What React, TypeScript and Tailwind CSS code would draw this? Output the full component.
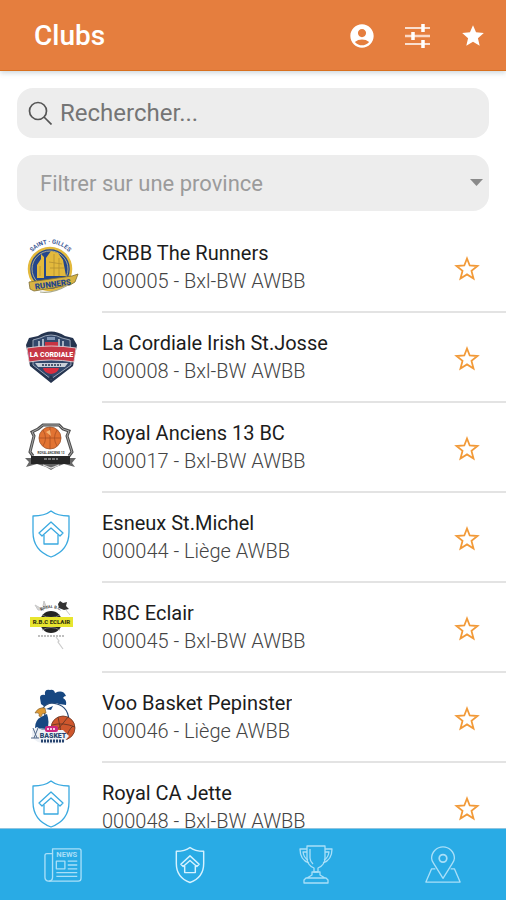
import { useState } from "react";
import type { ReactNode } from "react";
import { MdAccountCircle, MdStar } from "react-icons/md";

interface Club {
  id: string;
  name: string;
  region: string;
  logo: () => ReactNode;
}

function ShieldPaths() {
  return (
    <>
      <path d="M26 -1 C21 3 15 4 8 4 V20 C8 33 15 41 26 45 C37 41 44 33 44 20 V4 C37 4 31 3 26 -1 Z" />
      <path d="M26 10 L14 21 L17 24 L26 16 L35 24 L38 21 Z" />
      <path d="M19 23 V32 H33 V23" />
    </>
  );
}

function ShieldLogo() {
  return (
    <g fill="none" stroke="#3aa9e0" strokeWidth="1.3" strokeLinejoin="round">
      <ShieldPaths />
    </g>
  );
}

function RunnersLogo() {
  return (
    <>
      <path id="runners-arc" d="M4 15 A24 24 0 0 1 47 15" fill="none" />
      <text fill="#3c5794" fontSize="6" fontWeight="700">
        <textPath href="#runners-arc" startOffset="50%" textAnchor="middle">SAINT · GILLES</textPath>
      </text>
      <circle cx="25" cy="27" r="21" fill="#24468b" stroke="#e3b93c" strokeWidth="2.500" />
      <circle cx="25" cy="27" r="18" fill="none" stroke="#cfc48f" strokeWidth="0.8" />
      <path d="M12 36 V23 L16 17 V12 L19 15 V36 Z M21 34 V16 L26 9 L33 11 L38 18 L41 34 Z" fill="#e3b93c" />
      <path d="M15 24 V34 M24 20 L37 22 M25 26 H39 M29 12 V34 M34 16 V34" stroke="#b48f31" strokeWidth="0.8" />
      <path d="M4 40 L47 34 L53 32 L50 40 L45 43 L9 49 L5 47 Z" fill="#d8b443" stroke="#7d6c35" strokeWidth="0.8" />
      <text x="28" y="45" transform="rotate(-8 28 43)" textAnchor="middle" fill="#24468b" fontSize="8" fontWeight="900">RUNNERS</text>
      <path d="M15 50 Q28 52 43 43" fill="none" stroke="#aaa98c" strokeWidth="1.2" />
    </>
  );
}

function CordialeLogo() {
  return (
    <>
      <path d="M4 6 L13 4 Q26 -5 40 4 L48 6 L52 13 L48 34 L26 51 L5 34 L1 13 Z" fill="#25344f" />
      <path d="M8 8 L15 6 Q26 0 37 6 L45 8 L46 33 L26 47 L8 33 Z" fill="#33486b" stroke="#a4afc0" strokeWidth="0.9" />
      <path d="M14 9 V15 M18 7 V15 M34 7 V15 M38 9 V15" stroke="#c4ccd9" strokeWidth="1.6" />
      <path d="M22 5 H30 V8 H22 Z" fill="#8397b6" />
      <path d="M20 10 H33 V15 H20 Z" fill="#c73342" />
      <path d="M2 16 Q26 12 51 16 L49 30 Q26 26 4 30 Z" fill="#c63745" stroke="#e9e6ea" strokeWidth="0.8" />
      <text x="26.500" y="25" textAnchor="middle" fill="#fff" fontSize="7" fontWeight="900">LA CORDIALE</text>
      <path d="M10 31 H43 L40 35 H13 Z" fill="#c9cfd8" />
      <path d="M17 33 H36" stroke="#25344f" strokeWidth="1.4" strokeDasharray="2 1" />
      <path d="M18 36 H34 Q33 41 26 42 Q19 41 18 36 Z" fill="#d92e3f" />
      <path d="M26 43 L29 47 H23 Z" fill="#25344f" />
    </>
  );
}

function AnciensLogo() {
  return (
    <>
      <path d="M8 34 L5 30 L9 14 L7 10 L13 7 L18 3 H34 L38 7 L44 9 L42 14 L47 30 L44 34" fill="none" stroke="#4d4d4d" strokeWidth="3" />
      <path d="M8 34 L5 30 L9 14 L7 10 L13 7 L18 3 H34 L38 7 L44 9 L42 14 L47 30 L44 34" fill="none" stroke="#bdbdbd" strokeWidth="0.8" />
      <circle cx="25" cy="16" r="11" fill="#e27332" stroke="#9c542e" strokeWidth="0.8" />
      <path d="M14 16 H36 M25 5 V27 M18 8 Q23 16 18 24 M32 8 Q27 16 32 24" fill="none" stroke="#a94f22" strokeWidth="0.8" />
      <path d="M21 10 L25 8 L26 14 Z" fill="#f5b878" />
      <text x="26" y="32" textAnchor="middle" fill="#333" fontSize="3" fontWeight="700">ROYAL ANCIENS 13</text>
      <path d="M0 36 H51 L47 41 L50 45 L39 42 Q32 44 26 48 Q20 44 12 42 L1 45 L4 40 Z" fill="#666" />
      <path d="M6 34 H45 V42 H6 Z" fill="#272727" />
      <path d="M19 37 H33" stroke="#777" strokeWidth="2" strokeDasharray="3 1" />
      <path d="M18 43 L26 46 L34 43" fill="none" stroke="#ddd" strokeWidth="1.2" />
    </>
  );
}

function EclairLogo() {
  return (
    <>
      <path d="M10 3 L19 8 L13 8 Z M19 -1 L22 7 L18 4 Z" fill="#d5d5d5" stroke="#c8c8c8" strokeWidth="1" />
      <path id="eclair-arc" d="M14 10 Q26 2 38 10" fill="none" />
      <text fill="#333" fontSize="4" fontWeight="700">
        <textPath href="#eclair-arc" startOffset="50%" textAnchor="middle">ROYAL B.C.</textPath>
      </text>
      <circle cx="26" cy="20" r="11" fill="#242424" />
      <path d="M17 13 Q26 18 35 13 M17 28 Q26 23 35 28" fill="none" stroke="#888" strokeWidth="0.8" />
      <path d="M33 2 L35 -1 L38 1 L42 0 L41 4 L44 7 L39 8 L34 6 Z" fill="#333" />
      <path d="M41 8 L45 13" stroke="#c8c8c8" strokeWidth="1" />
      <rect x="5" y="15" width="43" height="10" fill="#e8e52f" />
      <text x="26.500" y="22" textAnchor="middle" fill="#36350e" fontSize="6" fontWeight="900">R.B.C ECLAIR</text>
      <path d="M13 34 H40" stroke="#aaa" strokeWidth="1.3" strokeDasharray="2 1" />
      <path d="M31 35 L34 39 L33 40 L38 47" fill="none" stroke="#ccc" strokeWidth="1.2" />
    </>
  );
}

function PepinsterLogo() {
  return (
    <>
      <path d="M16 12 L15 6 Q15 2 20 3 Q19 -3 25 -2 Q29 -3 30 1 Q38 -3 41 4 Q39 4 38 6 Q42 8 41 13 L34 12 Q27 9 20 15 Z" fill="#174781" />
      <path d="M18 16 Q23 9 32 12 Q44 15 44 31 L43 38 H14 L20 23 Z" fill="#fff" stroke="#294c79" strokeWidth="1.2" />
      <path d="M10 36 Q10 28 16 25 L22 22 Q25 31 22 37 Z" fill="#174781" />
      <path d="M10 21 Q13 15 20 16 L21 21 L17 22 Q17 26 14 24 Q15 20 10 21 Z" fill="#df9a34" stroke="#76592d" strokeWidth="0.6" />
      <path d="M21 17 L28 14 L26 18 Z" fill="#174781" />
      <circle cx="38" cy="36" r="12" fill="#cf572d" stroke="#693725" strokeWidth="0.8" />
      <path d="M27 33 Q38 30 50 35 M33 25 Q36 36 36 47 M43 25 Q36 35 29 40 M41 47 Q43 38 48 34" fill="none" stroke="#693725" strokeWidth="0.9" />
      <path d="M7 38 L12 35 L17 38 H38 L44 44 L39 50 Q26 54 13 50 L7 46 Z" fill="#edf1f6" />
      <rect x="20" y="34" width="13" height="6" rx="2" fill="#cc277f" />
      <path d="M22 37 H31" stroke="#f6cde2" strokeWidth="2" strokeDasharray="2 1" />
      <text x="28" y="46" textAnchor="middle" fill="#28456f" fontSize="7" fontWeight="900">BASKET</text>
      <path d="M16 49 H40" stroke="#28456f" strokeWidth="3" strokeDasharray="2 1" />
      <path d="M8 36 L12 46 M13 36 L9 46 M6 46 H14" stroke="#52698a" strokeWidth="1" />
    </>
  );
}

const clubs: Club[] = [
  { id: "000005", name: "CRBB The Runners", region: "Bxl-BW AWBB", logo: RunnersLogo },
  { id: "000008", name: "La Cordiale Irish St.Josse", region: "Bxl-BW AWBB", logo: CordialeLogo },
  { id: "000017", name: "Royal Anciens 13 BC", region: "Bxl-BW AWBB", logo: AnciensLogo },
  { id: "000044", name: "Esneux St.Michel", region: "Liège AWBB", logo: ShieldLogo },
  { id: "000045", name: "RBC Eclair", region: "Bxl-BW AWBB", logo: EclairLogo },
  { id: "000046", name: "Voo Basket Pepinster", region: "Liège AWBB", logo: PepinsterLogo },
  { id: "000048", name: "Royal CA Jette", region: "Bxl-BW AWBB", logo: ShieldLogo },
];

function Header() {
  return (
    <header className="relative flex h-[71px] shrink-0 items-center justify-between border-b border-[#d8701f] bg-[#e57e3e] pl-[34px] pr-5 pt-px text-white shadow-[0_2px_5px_rgba(60,100,120,0.25)]">
      <h1 className="text-[28px] font-medium leading-8">Clubs</h1>
      <div className="flex items-center gap-7">
        <button aria-label="Compte">
          <MdAccountCircle className="size-7" />
        </button>
        <button aria-label="Filtres">
          <svg className="size-7" viewBox="0 0 28 28" fill="none" stroke="currentColor">
            <path d="M1 6 H26 M1 22 H26" strokeWidth="1.500" />
            <path d="M1 14 H26" strokeWidth="2.500" stroke="#fbd9c6" />
            <path d="M19 2 V10 M9 10 V18 M19 18 V26" strokeWidth="3.500" />
          </svg>
        </button>
        <button aria-label="Favoris">
          <MdStar className="size-[26px]" />
        </button>
      </div>
    </header>
  );
}

function Filters() {
  return (
    <div className="flex shrink-0 flex-col gap-[17px] px-[17px] pb-3 pt-[17px]">
      <label className="flex h-[50px] items-center gap-2 rounded-2xl bg-[#ededed] pl-[11px] pr-4">
        <svg className="size-6 shrink-0" viewBox="0 0 24 24" fill="none" stroke="#555" strokeWidth="1.700">
          <circle cx="10" cy="10" r="8.500" />
          <path d="M16 16 L23.500 23.500" />
        </svg>
        <input
          type="search"
          aria-label="Rechercher"
          placeholder="Rechercher..."
          className="w-full min-w-0 bg-transparent text-2xl text-[#444] outline-none placeholder:text-[#757575]"
        />
      </label>
      <div className="relative">
        <select
          aria-label="Filtrer sur une province"
          className="h-14 w-full appearance-none rounded-2xl bg-[#ededed] pl-[23px] pr-8 text-[22px] text-[#9b9b9b] outline-none"
        >
          <option>Filtrer sur une province</option>
        </select>
        <svg className="pointer-events-none absolute right-[6px] top-6 h-[7px] w-[13px]" viewBox="0 0 13 7" fill="#8a8a8a">
          <path d="M0 0 H13 L6.500 7 Z" />
        </svg>
      </div>
    </div>
  );
}

function ClubRow({ club }: { club: Club }) {
  const [favorite, setFavorite] = useState(false);
  const Logo = club.logo;

  return (
    <li className="flex h-[90px] items-center pl-[25px]">
      <svg className="size-[52px] shrink-0 overflow-visible" viewBox="0 0 52 52" aria-hidden="true">
        <Logo />
      </svg>
      <div className="ml-[25px] flex h-full min-w-0 flex-1 items-center justify-between border-b-2 border-[#e3e3e3] pr-6">
        <div className="min-w-0 pb-px text-xl leading-7">
          <p className="truncate text-[#1c1c1c]">{club.name}</p>
          <p className="truncate font-light text-[#444]">
            {club.id} - {club.region}
          </p>
        </div>
        <button
          aria-label={`Ajouter ${club.name} aux favoris`}
          aria-pressed={favorite}
          onClick={() => setFavorite(!favorite)}
          className="pt-[3px]"
        >
          <svg
            className="size-[30px] text-[#f29a38]"
            viewBox="0 0 30 30"
            fill={favorite ? "currentColor" : "none"}
            stroke="currentColor"
            strokeWidth="1.800"
          >
            <path d="M15 4.500 L17.700 11.500 L25.500 12 L19.500 16.900 L21.500 24.500 L15 20.400 L8.500 24.500 L10.500 16.900 L4.500 12 L12.300 11.500 Z" />
          </svg>
        </button>
      </div>
    </li>
  );
}

function BottomNav() {
  return (
    <nav className="grid h-[72px] shrink-0 grid-cols-4 border-t border-[#8fc4df] bg-[#29abe5] pt-px text-[#a9dff8]">
      <a href="#news" aria-label="News" className="flex items-center justify-center">
        <svg className="size-[38px]" viewBox="0 0 40 40" fill="none" stroke="currentColor" strokeWidth="1.400" strokeLinejoin="round">
          <path d="M9 3 H37 Q39 3 39 5 V34 Q39 37 36 37 H5 Q1 37 1 33 V10 Q1 8 3 8 H9 Z" />
          <path d="M9 8 V33 Q9 37 5 37" />
          <rect x="13" y="16" width="9" height="8" />
          <path d="M25 16 H35 M25 20 H35 M25 24 H35 M13 28 H35 M13 32 H35" />
          <text x="24" y="12" textAnchor="middle" fill="currentColor" stroke="none" fontSize="8" fontWeight="700">NEWS</text>
        </svg>
      </a>
      <a href="#clubs" aria-label="Clubs" aria-current="page" className="flex items-center justify-center text-[#d6f2ff]">
        <svg className="h-[38px] w-8" viewBox="6 -3 40 50" fill="none" stroke="currentColor" strokeWidth="1.900" strokeLinejoin="round">
          <ShieldPaths />
        </svg>
      </a>
      <a href="#competitions" aria-label="Compétitions" className="flex items-center justify-center">
        <svg className="size-10" viewBox="0 0 40 40" fill="none" stroke="currentColor" strokeWidth="1.300" strokeLinejoin="round">
          <path d="M11 1 H29 V13 Q29 20 22 23 V27 H18 V23 Q11 20 11 13 Z" />
          <path d="M11 4 H4 Q4 15 13 18 M11 7 H7 Q8 13 12 15 M29 4 H36 Q36 15 27 18 M29 7 H33 Q32 13 28 15" />
          <path d="M16 27 H24 V30 L29 33 H11 L16 30 Z M10 33 H30 L32 35 V38 H8 V35 Z" />
          <path d="M14 4 V13 Q14 16 17 19" />
        </svg>
      </a>
      <a href="#map" aria-label="Carte" className="flex items-center justify-center">
        <svg className="size-[38px]" viewBox="0 0 40 40" fill="none" stroke="currentColor" strokeWidth="1.400" strokeLinejoin="round">
          <path d="M20 34 L10 18 Q8 15 8 13 A12 12 0 0 1 32 13 Q32 15 30 18 Z" />
          <circle cx="20" cy="13" r="4" strokeWidth="1.800" />
          <path d="M12 24 H8 L2 38 H38 L32 24 H28" />
        </svg>
      </a>
    </nav>
  );
}

export default function App() {
  return (
    <div className="flex h-screen flex-col bg-white font-[Roboto,sans-serif]">
      <Header />
      <Filters />
      <ul className="min-h-0 flex-1 overflow-hidden">
        {clubs.map((club) => (
          <ClubRow key={club.id} club={club} />
        ))}
      </ul>
      <BottomNav />
    </div>
  );
}
